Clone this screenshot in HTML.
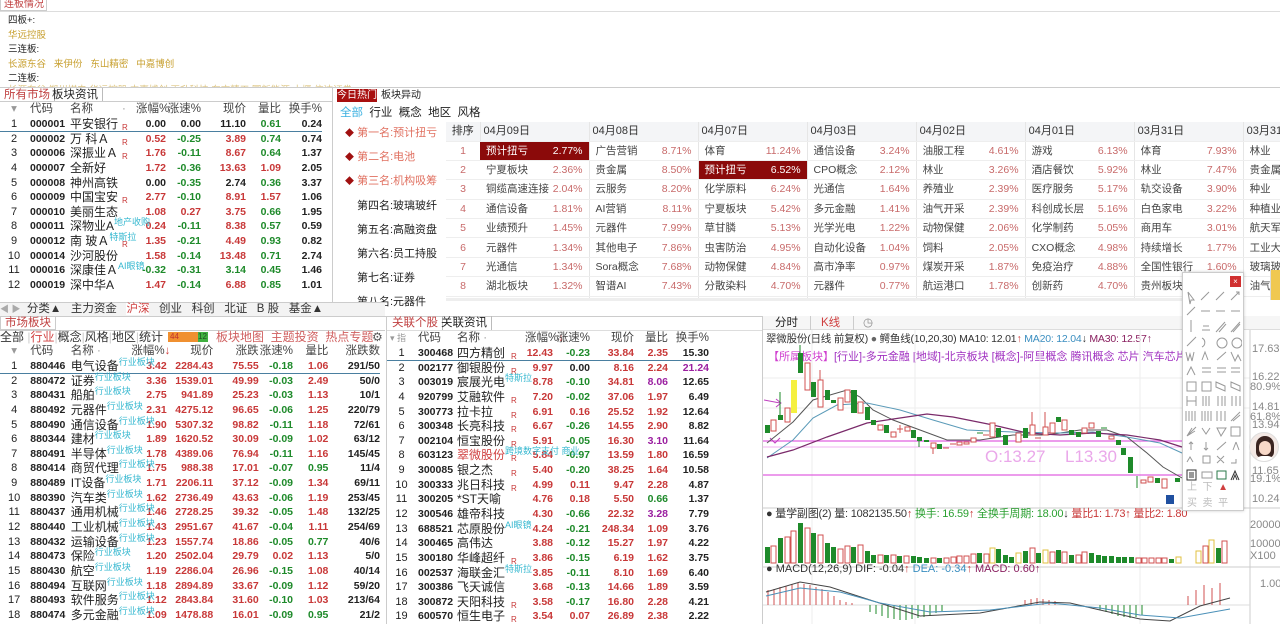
<!DOCTYPE html>
<html><head><meta charset="utf-8">
<style>
*{margin:0;padding:0;box-sizing:border-box}
body{width:1280px;height:624px;overflow:hidden;background:#fff;font-family:"Liberation Sans","Noto Sans CJK SC",sans-serif;font-size:11px;color:#222;position:relative}
.a{position:absolute;white-space:nowrap}
.s{font-size:9.5px}
.gold{color:#c8a030}
table{border-collapse:collapse;table-layout:fixed;position:absolute}
td{height:14.65px;line-height:14px;padding:0;white-space:nowrap;overflow:visible;font-size:11px;vertical-align:middle}
td span{line-height:1}
td.n{text-align:right;font-weight:bold;font-family:"Liberation Sans",sans-serif;font-size:10.5px}
td.c{text-align:center}
td.code{font-weight:bold;font-size:10.5px;padding-left:2px}
td.nm{font-size:12px}
.r{color:#c83838}.g{color:#1e8a2a}.p{color:#9b1fa0}.k{color:#222}
.R{color:#c83838;font-size:8px;position:relative;top:3px}
.tag{color:#36b8d0;font-size:9px;position:relative;top:-5px}
tr.hd td{color:#444;font-size:11.5px}
.tab{position:absolute;height:14px;line-height:14px;font-size:11.5px;padding:0 4px;border-right:1px solid #bbb}
.hot td{height:19.4px;line-height:18px;font-size:10.5px;border-bottom:1px solid #eee;color:#444}
.hot td.pc{color:#c86a6a;text-align:right;padding-right:6px;border-right:1px solid #e6e6e6}
.hot td.nmh{padding-left:6px}
.hot td.hl{background:#8b0a0a;color:#fff}
.hot tr.h td{background:#f4f5f7;color:#333;font-size:11px;height:19px}
</style></head><body>

<div class="a" style="left:0;top:0;width:47px;height:11px;border:1px solid #ccc;border-top:none;color:#c04040;font-size:10px;line-height:9px;padding-left:3px">连板情况</div>
<div class="a" style="left:0;top:11px;width:1280px;border-top:1px solid #ddd"></div>
<div class="a s" style="left:8px;top:12px">四板+:</div>
<div class="a s gold" style="left:8px;top:27px">华远控股</div>
<div class="a s" style="left:8px;top:41px">三连板:</div>
<div class="a s gold" style="left:8px;top:56px">长源东谷&nbsp;&nbsp; 来伊份&nbsp;&nbsp; 东山精密&nbsp;&nbsp; 中嘉博创</div>
<div class="a s" style="left:8px;top:70px">二连板:</div>
<div class="a s gold" style="left:8px;top:82px;height:5px;overflow:hidden;opacity:.6">长源东谷 郑州煤电 华远控股 中嘉博创 再升科技 东方精工 国新能源 十堰 信达证券</div>

<div class="a" style="left:0;top:87px;width:1280px;border-top:1px solid #ccc"></div>
<div class="tab" style="left:0;top:88px;color:#c04040">所有市场</div>
<div class="tab" style="left:48px;top:88px">板块资讯</div>
<div class="a" style="left:0;top:101px;width:332px;border-top:1px solid #ccc"></div>

<table style="left:0;top:102px;width:322px">
<col style="width:28px"><col style="width:42px"><col style="width:52px"><col style="width:14px"><col style="width:30px"><col style="width:35px"><col style="width:45px"><col style="width:35px"><col style="width:41px">
<tr class="hd"><td class="c" style="color:#999">▾</td><td style="padding-left:2px">代码</td><td>名称</td><td style="color:#999">·</td><td style="text-align:right">涨幅%</td><td style="text-align:right">涨速%</td><td style="text-align:right">现价</td><td style="text-align:right">量比</td><td style="text-align:right">换手%</td></tr>
<tr style="border-bottom:1px solid #4a7fa0"><td class="c">1</td><td class="code">000001</td><td class="nm">平安银行</td><td><span class="R">R</span></td><td class="n k">0.00</td><td class="n k">0.00</td><td class="n k">11.10</td><td class="n g">0.61</td><td class="n k">0.24</td></tr>
<tr><td class="c">2</td><td class="code">000002</td><td class="nm">万 科Ａ</td><td><span class="R">R</span></td><td class="n r">0.52</td><td class="n g">-0.25</td><td class="n r">3.89</td><td class="n g">0.74</td><td class="n k">0.74</td></tr>
<tr><td class="c">3</td><td class="code">000006</td><td class="nm">深振业Ａ</td><td><span class="R">R</span></td><td class="n r">1.76</td><td class="n g">-0.11</td><td class="n r">8.67</td><td class="n g">0.64</td><td class="n k">1.37</td></tr>
<tr><td class="c">4</td><td class="code">000007</td><td class="nm">全新好</td><td></td><td class="n r">1.72</td><td class="n g">-0.36</td><td class="n r">13.63</td><td class="n r">1.09</td><td class="n k">2.05</td></tr>
<tr><td class="c">5</td><td class="code">000008</td><td class="nm">神州高铁</td><td></td><td class="n k">0.00</td><td class="n g">-0.35</td><td class="n k">2.74</td><td class="n g">0.36</td><td class="n k">3.37</td></tr>
<tr><td class="c">6</td><td class="code">000009</td><td class="nm">中国宝安</td><td><span class="R">R</span></td><td class="n r">2.77</td><td class="n g">-0.10</td><td class="n r">8.91</td><td class="n r">1.57</td><td class="n k">1.06</td></tr>
<tr><td class="c">7</td><td class="code">000010</td><td class="nm">美丽生态</td><td></td><td class="n r">1.08</td><td class="n r">0.27</td><td class="n r">3.75</td><td class="n g">0.66</td><td class="n k">1.95</td></tr>
<tr><td class="c">8</td><td class="code">000011</td><td class="nm">深物业A<span class="tag">地产收购</span></td><td></td><td class="n r">0.24</td><td class="n g">-0.11</td><td class="n r">8.38</td><td class="n g">0.57</td><td class="n k">0.59</td></tr>
<tr><td class="c">9</td><td class="code">000012</td><td class="nm">南 玻Ａ<span class="tag">特斯拉</span></td><td><span class="R">R</span></td><td class="n r">1.35</td><td class="n g">-0.21</td><td class="n r">4.49</td><td class="n g">0.93</td><td class="n k">0.82</td></tr>
<tr><td class="c">10</td><td class="code">000014</td><td class="nm">沙河股份</td><td></td><td class="n r">1.58</td><td class="n g">-0.14</td><td class="n r">13.48</td><td class="n g">0.71</td><td class="n k">2.74</td></tr>
<tr><td class="c">11</td><td class="code">000016</td><td class="nm">深康佳Ａ<span class="tag">AI眼镜</span></td><td></td><td class="n g">-0.32</td><td class="n g">-0.31</td><td class="n g">3.14</td><td class="n g">0.45</td><td class="n k">1.46</td></tr>
<tr><td class="c">12</td><td class="code">000019</td><td class="nm">深中华A</td><td></td><td class="n r">1.47</td><td class="n g">-0.14</td><td class="n r">6.88</td><td class="n g">0.85</td><td class="n k">1.01</td></tr>
</table>
<div class="a" style="left:332px;top:88px;height:214px;border-left:1px solid #ccc"></div>

<div class="a" style="left:337px;top:89px;width:40px;height:13px;background:#a80f0f;color:#fff;font-size:10px;line-height:13px;text-align:center">今日热门</div>
<div class="a" style="left:381px;top:89px;font-size:10px;line-height:13px">板块异动</div>
<div class="a" style="left:340px;top:104px;font-size:11.5px"><span style="color:#3ab0e0">全部</span>&nbsp; 行业&nbsp; 概念&nbsp; 地区&nbsp; 风格</div>
<div class="a" style="left:345px;top:121px;font-size:11px;line-height:24.2px;color:#222">
<div><span style="color:#a01010;font-size:9px">◆</span> <span style="color:#e07060">第一名:预计扭亏</span></div>
<div><span style="color:#a01010;font-size:9px">◆</span> <span style="color:#e07060">第二名:电池</span></div>
<div><span style="color:#a01010;font-size:9px">◆</span> <span style="color:#e07060">第三名:机构吸筹</span></div>
<div style="padding-left:12px">第四名:玻璃玻纤</div>
<div style="padding-left:12px">第五名:高融资盘</div>
<div style="padding-left:12px">第六名:员工持股</div>
<div style="padding-left:12px">第七名:证券</div>
<div style="padding-left:12px">第八名:元器件</div>
</div>
<div class="a" style="left:446px;top:122px;width:834px;height:178px;overflow:hidden">
<table class="hot" style="left:0;top:0;width:906px">
<col style="width:34px"><col style="width:64px"><col style="width:45px"><col style="width:64px"><col style="width:45px"><col style="width:64px"><col style="width:45px"><col style="width:64px"><col style="width:45px"><col style="width:64px"><col style="width:45px"><col style="width:64px"><col style="width:45px"><col style="width:64px"><col style="width:45px"><col style="width:64px"><col style="width:45px">
<tr class="h"><td class="c" style="border-right:1px solid #e6e6e6">排序</td><td colspan="2" style="padding-left:3px;border-right:1px solid #e6e6e6">04月09日</td><td colspan="2" style="padding-left:3px;border-right:1px solid #e6e6e6">04月08日</td><td colspan="2" style="padding-left:3px;border-right:1px solid #e6e6e6">04月07日</td><td colspan="2" style="padding-left:3px;border-right:1px solid #e6e6e6">04月03日</td><td colspan="2" style="padding-left:3px;border-right:1px solid #e6e6e6">04月02日</td><td colspan="2" style="padding-left:3px;border-right:1px solid #e6e6e6">04月01日</td><td colspan="2" style="padding-left:3px;border-right:1px solid #e6e6e6">03月31日</td><td colspan="2" style="padding-left:3px">03月31日</td></tr>
<tr><td class="c" style="color:#c86a6a">1</td><td class="nmh hl">预计扭亏</td><td class="pc hl" style="color:#fff">2.77%</td><td class="nmh">广告营销</td><td class="pc">8.71%</td><td class="nmh">体育</td><td class="pc">11.24%</td><td class="nmh">通信设备</td><td class="pc">3.24%</td><td class="nmh">油服工程</td><td class="pc">4.61%</td><td class="nmh">游戏</td><td class="pc">6.13%</td><td class="nmh">体育</td><td class="pc">7.93%</td><td class="nmh">林业</td><td class="pc">6.1%</td></tr>
<tr><td class="c" style="color:#c86a6a">2</td><td class="nmh">宁夏板块</td><td class="pc">2.36%</td><td class="nmh">贵金属</td><td class="pc">8.50%</td><td class="nmh hl">预计扭亏</td><td class="pc hl" style="color:#fff">6.52%</td><td class="nmh">CPO概念</td><td class="pc">2.12%</td><td class="nmh">林业</td><td class="pc">3.26%</td><td class="nmh">酒店餐饮</td><td class="pc">5.92%</td><td class="nmh">林业</td><td class="pc">7.47%</td><td class="nmh">贵金属</td><td class="pc">5.1%</td></tr>
<tr><td class="c" style="color:#c86a6a">3</td><td class="nmh">铜缆高速连接</td><td class="pc">2.04%</td><td class="nmh">云服务</td><td class="pc">8.20%</td><td class="nmh">化学原料</td><td class="pc">6.24%</td><td class="nmh">光通信</td><td class="pc">1.64%</td><td class="nmh">养殖业</td><td class="pc">2.39%</td><td class="nmh">医疗服务</td><td class="pc">5.17%</td><td class="nmh">轨交设备</td><td class="pc">3.90%</td><td class="nmh">种业</td><td class="pc">4.1%</td></tr>
<tr><td class="c" style="color:#c86a6a">4</td><td class="nmh">通信设备</td><td class="pc">1.81%</td><td class="nmh">AI营销</td><td class="pc">8.11%</td><td class="nmh">宁夏板块</td><td class="pc">5.42%</td><td class="nmh">多元金融</td><td class="pc">1.41%</td><td class="nmh">油气开采</td><td class="pc">2.39%</td><td class="nmh">科创成长层</td><td class="pc">5.16%</td><td class="nmh">白色家电</td><td class="pc">3.22%</td><td class="nmh">种植业</td><td class="pc">3.1%</td></tr>
<tr><td class="c" style="color:#c86a6a">5</td><td class="nmh">业绩预升</td><td class="pc">1.45%</td><td class="nmh">元器件</td><td class="pc">7.99%</td><td class="nmh">草甘膦</td><td class="pc">5.13%</td><td class="nmh">光学光电</td><td class="pc">1.22%</td><td class="nmh">动物保健</td><td class="pc">2.06%</td><td class="nmh">化学制药</td><td class="pc">5.05%</td><td class="nmh">商用车</td><td class="pc">3.01%</td><td class="nmh">航天军工</td><td class="pc">2.9%</td></tr>
<tr><td class="c" style="color:#c86a6a">6</td><td class="nmh">元器件</td><td class="pc">1.34%</td><td class="nmh">其他电子</td><td class="pc">7.86%</td><td class="nmh">虫害防治</td><td class="pc">4.95%</td><td class="nmh">自动化设备</td><td class="pc">1.04%</td><td class="nmh">饲料</td><td class="pc">2.05%</td><td class="nmh">CXO概念</td><td class="pc">4.98%</td><td class="nmh">持续增长</td><td class="pc">1.77%</td><td class="nmh">工业大麻</td><td class="pc">2.1%</td></tr>
<tr><td class="c" style="color:#c86a6a">7</td><td class="nmh">光通信</td><td class="pc">1.34%</td><td class="nmh">Sora概念</td><td class="pc">7.68%</td><td class="nmh">动物保健</td><td class="pc">4.84%</td><td class="nmh">高市净率</td><td class="pc">0.97%</td><td class="nmh">煤炭开采</td><td class="pc">1.87%</td><td class="nmh">免疫治疗</td><td class="pc">4.88%</td><td class="nmh">全国性银行</td><td class="pc">1.60%</td><td class="nmh">玻璃玻纤</td><td class="pc">1.9%</td></tr>
<tr><td class="c" style="color:#c86a6a">8</td><td class="nmh">湖北板块</td><td class="pc">1.32%</td><td class="nmh">智谱AI</td><td class="pc">7.43%</td><td class="nmh">分散染料</td><td class="pc">4.70%</td><td class="nmh">元器件</td><td class="pc">0.77%</td><td class="nmh">航运港口</td><td class="pc">1.78%</td><td class="nmh">创新药</td><td class="pc">4.70%</td><td class="nmh">贵州板块</td><td class="pc">1.44%</td><td class="nmh">油气开采</td><td class="pc">1.8%</td></tr>
<tr><td class="c" style="color:#c86a6a">9</td><td class="nmh">苹果概念</td><td class="pc">1.13%</td><td class="nmh">其他发电设备</td><td class="pc">7.35%</td><td class="nmh">农药兽药</td><td class="pc">4.33%</td><td class="nmh">光学</td><td class="pc">0.66%</td><td class="nmh">医药商业</td><td class="pc">1.53%</td><td class="nmh">生物制品</td><td class="pc">4.63%</td><td class="nmh">汽车零部</td><td class="pc">1.3%</td><td class="nmh">综合</td><td class="pc">1.7%</td></tr>
</table></div>
<div class="a" style="left:446px;top:298px;width:760px;height:3px;background:#eee"></div>

<div class="a" style="left:0;top:302px;width:385px;height:14px;background:#f3f3f3;border-top:1px solid #ccc;font-size:11.5px;line-height:13px;color:#333">
<span style="color:#aaa;font-size:9px">◀ ▶</span>&nbsp; 分类▲&nbsp;&nbsp; 主力资金&nbsp;&nbsp; <span style="color:#d04040;background:#fff">沪深</span>&nbsp;&nbsp; 创业&nbsp;&nbsp; 科创&nbsp;&nbsp; 北证&nbsp;&nbsp; B 股&nbsp;&nbsp; 基金▲</div>
<div class="a" style="left:0;top:316px;width:1280px;border-top:1px solid #ccc"></div>

<div class="tab" style="left:0;top:316px;color:#c04040;border:1px solid #ccc;border-top:none">市场板块</div>
<div class="a" style="left:0;top:330px;width:385px;border-top:1px solid #ccc"></div>
<div class="a" style="left:0;top:330px;font-size:12px;line-height:14px;color:#333">全部 <span style="color:#ccc">|</span><span style="color:#d04040">行业</span><span style="color:#ccc">|</span>概念<span style="color:#ccc">|</span>风格<span style="color:#ccc">|</span>地区<span style="color:#ccc">|</span>统计</div>
<div class="a" style="left:168px;top:332px;width:40px;height:10px;background:#f09030;font-size:8px;line-height:10px;color:#c03030;padding-left:2px">44<span style="position:absolute;right:0;width:10px;height:10px;background:#40b040;color:#205020">12</span></div>
<div class="a" style="left:216px;top:330px;font-size:12px;line-height:14px;color:#d06060">板块地图&nbsp; 主题投资&nbsp; 热点专题</div>
<div class="a" style="left:372px;top:330px;font-size:12px;color:#555">⚙</div>
<table style="left:0;top:344px;width:380px">
<col style="width:28px"><col style="width:42px"><col style="width:60px"><col style="width:35px"><col style="width:46px"><col style="width:45px"><col style="width:34px"><col style="width:35px"><col style="width:51px">
<tr class="hd"><td class="c" style="color:#999">▾</td><td style="padding-left:2px">代码</td><td>名称 <span style="color:#999">·</span></td><td style="text-align:right">涨幅%<span style="color:#d04040">↓</span></td><td style="text-align:right">现价</td><td style="text-align:right">涨跌</td><td style="text-align:right">涨速%</td><td style="text-align:right">量比</td><td style="text-align:right">涨跌数</td></tr>
<tr style="border-bottom:1px solid #4a7fa0"><td class="c">1</td><td class="code">880446</td><td class="nm">电气设备<span class="tag">行业板块</span></td><td class="n r">3.42</td><td class="n r">2284.43</td><td class="n r">75.55</td><td class="n g">-0.18</td><td class="n r">1.06</td><td class="n k">291/50</td></tr>
<tr><td class="c">2</td><td class="code">880472</td><td class="nm">证券<span class="tag">行业板块</span></td><td class="n r">3.36</td><td class="n r">1539.01</td><td class="n r">49.99</td><td class="n g">-0.03</td><td class="n r">2.49</td><td class="n k">50/0</td></tr>
<tr><td class="c">3</td><td class="code">880431</td><td class="nm">船舶<span class="tag">行业板块</span></td><td class="n r">2.75</td><td class="n r">941.89</td><td class="n r">25.23</td><td class="n g">-0.03</td><td class="n r">1.13</td><td class="n k">10/1</td></tr>
<tr><td class="c">4</td><td class="code">880492</td><td class="nm">元器件<span class="tag">行业板块</span></td><td class="n r">2.31</td><td class="n r">4275.12</td><td class="n r">96.65</td><td class="n g">-0.06</td><td class="n r">1.25</td><td class="n k">220/79</td></tr>
<tr><td class="c">5</td><td class="code">880490</td><td class="nm">通信设备<span class="tag">行业板块</span></td><td class="n r">1.90</td><td class="n r">5307.32</td><td class="n r">98.82</td><td class="n g">-0.11</td><td class="n r">1.18</td><td class="n k">72/61</td></tr>
<tr><td class="c">6</td><td class="code">880344</td><td class="nm">建材<span class="tag">行业板块</span></td><td class="n r">1.89</td><td class="n r">1620.52</td><td class="n r">30.09</td><td class="n g">-0.09</td><td class="n r">1.02</td><td class="n k">63/12</td></tr>
<tr><td class="c">7</td><td class="code">880491</td><td class="nm">半导体<span class="tag">行业板块</span></td><td class="n r">1.78</td><td class="n r">4389.06</td><td class="n r">76.94</td><td class="n g">-0.11</td><td class="n r">1.16</td><td class="n k">145/45</td></tr>
<tr><td class="c">8</td><td class="code">880414</td><td class="nm">商贸代理<span class="tag">行业板块</span></td><td class="n r">1.75</td><td class="n r">988.38</td><td class="n r">17.01</td><td class="n g">-0.07</td><td class="n g">0.95</td><td class="n k">11/4</td></tr>
<tr><td class="c">9</td><td class="code">880489</td><td class="nm">IT设备<span class="tag">行业板块</span></td><td class="n r">1.71</td><td class="n r">2206.11</td><td class="n r">37.12</td><td class="n g">-0.09</td><td class="n r">1.34</td><td class="n k">69/11</td></tr>
<tr><td class="c">10</td><td class="code">880390</td><td class="nm">汽车类<span class="tag">行业板块</span></td><td class="n r">1.62</td><td class="n r">2736.49</td><td class="n r">43.63</td><td class="n g">-0.06</td><td class="n r">1.19</td><td class="n k">253/45</td></tr>
<tr><td class="c">11</td><td class="code">880437</td><td class="nm">通用机械<span class="tag">行业板块</span></td><td class="n r">1.46</td><td class="n r">2728.25</td><td class="n r">39.32</td><td class="n g">-0.05</td><td class="n r">1.48</td><td class="n k">132/25</td></tr>
<tr><td class="c">12</td><td class="code">880440</td><td class="nm">工业机械<span class="tag">行业板块</span></td><td class="n r">1.43</td><td class="n r">2951.67</td><td class="n r">41.67</td><td class="n g">-0.04</td><td class="n r">1.11</td><td class="n k">254/69</td></tr>
<tr><td class="c">13</td><td class="code">880432</td><td class="nm">运输设备<span class="tag">行业板块</span></td><td class="n r">1.23</td><td class="n r">1557.74</td><td class="n r">18.86</td><td class="n g">-0.05</td><td class="n g">0.77</td><td class="n k">40/6</td></tr>
<tr><td class="c">14</td><td class="code">880473</td><td class="nm">保险<span class="tag">行业板块</span></td><td class="n r">1.20</td><td class="n r">2502.04</td><td class="n r">29.79</td><td class="n r">0.02</td><td class="n r">1.13</td><td class="n k">5/0</td></tr>
<tr><td class="c">15</td><td class="code">880430</td><td class="nm">航空<span class="tag">行业板块</span></td><td class="n r">1.19</td><td class="n r">2286.04</td><td class="n r">26.96</td><td class="n g">-0.15</td><td class="n r">1.08</td><td class="n k">40/14</td></tr>
<tr><td class="c">16</td><td class="code">880494</td><td class="nm">互联网<span class="tag">行业板块</span></td><td class="n r">1.18</td><td class="n r">2894.89</td><td class="n r">33.67</td><td class="n g">-0.09</td><td class="n r">1.12</td><td class="n k">59/20</td></tr>
<tr><td class="c">17</td><td class="code">880493</td><td class="nm">软件服务<span class="tag">行业板块</span></td><td class="n r">1.12</td><td class="n r">2843.84</td><td class="n r">31.60</td><td class="n g">-0.10</td><td class="n r">1.03</td><td class="n k">213/64</td></tr>
<tr><td class="c">18</td><td class="code">880474</td><td class="nm">多元金融<span class="tag">行业板块</span></td><td class="n r">1.09</td><td class="n r">1478.88</td><td class="n r">16.01</td><td class="n g">-0.09</td><td class="n g">0.95</td><td class="n k">21/2</td></tr>
</table>
<div class="a" style="left:386px;top:316px;height:308px;border-left:1px solid #ccc"></div>

<div class="tab" style="left:388px;top:316px;color:#c04040">关联个股</div>
<div class="tab" style="left:437px;top:316px">关联资讯</div>
<div class="a" style="left:387px;top:330px;width:375px;border-top:1px solid #ddd"></div>
<table style="left:387px;top:331px;width:322px">
<col style="width:29px"><col style="width:41px"><col style="width:54px"><col style="width:14px"><col style="width:28px"><col style="width:37px"><col style="width:44px"><col style="width:34px"><col style="width:41px">
<tr class="hd"><td style="color:#999;padding-left:3px;font-size:9px">▾ 指</td><td style="padding-left:2px">代码</td><td>名称 <span style="color:#999">·</span></td><td></td><td style="text-align:right">涨幅%<span style="color:#d04040">↓</span></td><td style="text-align:right">涨速%</td><td style="text-align:right">现价</td><td style="text-align:right">量比</td><td style="text-align:right">换手%</td></tr>
<tr style="border-bottom:1px solid #4a7fa0"><td class="c">1</td><td class="code">300468</td><td class="nm">四方精创</td><td><span class="R">R</span></td><td class="n r">12.43</td><td class="n g">-0.23</td><td class="n r">33.84</td><td class="n r">2.35</td><td class="n k">15.30</td></tr>
<tr><td class="c">2</td><td class="code">002177</td><td class="nm">御银股份</td><td><span class="R">R</span></td><td class="n r">9.97</td><td class="n k">0.00</td><td class="n r">8.16</td><td class="n r">2.24</td><td class="n p">21.24</td></tr>
<tr><td class="c">3</td><td class="code">003019</td><td class="nm">宸展光电<span class="tag">特斯拉</span></td><td></td><td class="n r">8.78</td><td class="n g">-0.10</td><td class="n r">34.81</td><td class="n p">8.06</td><td class="n k">12.65</td></tr>
<tr><td class="c">4</td><td class="code">920799</td><td class="nm">艾融软件</td><td><span class="R">R</span></td><td class="n r">7.20</td><td class="n g">-0.02</td><td class="n r">37.06</td><td class="n r">1.97</td><td class="n k">6.49</td></tr>
<tr><td class="c">5</td><td class="code">300773</td><td class="nm">拉卡拉</td><td><span class="R">R</span></td><td class="n r">6.91</td><td class="n r">0.16</td><td class="n r">25.52</td><td class="n r">1.92</td><td class="n k">12.64</td></tr>
<tr><td class="c">6</td><td class="code">300348</td><td class="nm">长亮科技</td><td><span class="R">R</span></td><td class="n r">6.67</td><td class="n g">-0.26</td><td class="n r">14.55</td><td class="n r">2.90</td><td class="n k">8.82</td></tr>
<tr><td class="c">7</td><td class="code">002104</td><td class="nm">恒宝股份</td><td><span class="R">R</span></td><td class="n r">5.91</td><td class="n g">-0.05</td><td class="n r">16.30</td><td class="n p">3.10</td><td class="n k">11.64</td></tr>
<tr><td class="c">8</td><td class="code">603123</td><td class="nm" style="color:#d04040">翠微股份<span class="tag">跨境数字支付 商业</span></td><td><span class="R">R</span></td><td class="n r">5.84</td><td class="n g">-0.97</td><td class="n r">13.59</td><td class="n r">1.80</td><td class="n k">16.59</td></tr>
<tr><td class="c">9</td><td class="code">300085</td><td class="nm">银之杰</td><td><span class="R">R</span></td><td class="n r">5.40</td><td class="n g">-0.20</td><td class="n r">38.25</td><td class="n r">1.64</td><td class="n k">10.58</td></tr>
<tr><td class="c">10</td><td class="code">300333</td><td class="nm">兆日科技</td><td><span class="R">R</span></td><td class="n r">4.99</td><td class="n r">0.11</td><td class="n r">9.47</td><td class="n r">2.28</td><td class="n k">4.87</td></tr>
<tr><td class="c">11</td><td class="code">300205</td><td class="nm">*ST天喻</td><td></td><td class="n r">4.76</td><td class="n r">0.18</td><td class="n r">5.50</td><td class="n g">0.66</td><td class="n k">1.37</td></tr>
<tr><td class="c">12</td><td class="code">300546</td><td class="nm">雄帝科技</td><td></td><td class="n r">4.30</td><td class="n g">-0.66</td><td class="n r">22.32</td><td class="n p">3.28</td><td class="n k">7.79</td></tr>
<tr><td class="c">13</td><td class="code">688521</td><td class="nm">芯原股份<span class="tag">AI眼镜</span></td><td></td><td class="n r">4.24</td><td class="n g">-0.21</td><td class="n r">248.34</td><td class="n r">1.09</td><td class="n k">3.76</td></tr>
<tr><td class="c">14</td><td class="code">300465</td><td class="nm">高伟达</td><td></td><td class="n r">3.88</td><td class="n g">-0.12</td><td class="n r">15.27</td><td class="n r">1.97</td><td class="n k">4.22</td></tr>
<tr><td class="c">15</td><td class="code">300180</td><td class="nm">华峰超纤</td><td><span class="R">R</span></td><td class="n r">3.86</td><td class="n g">-0.15</td><td class="n r">6.19</td><td class="n r">1.62</td><td class="n k">3.75</td></tr>
<tr><td class="c">16</td><td class="code">002537</td><td class="nm">海联金汇<span class="tag">特斯拉</span></td><td></td><td class="n r">3.85</td><td class="n g">-0.11</td><td class="n r">8.10</td><td class="n r">1.69</td><td class="n k">6.40</td></tr>
<tr><td class="c">17</td><td class="code">300386</td><td class="nm">飞天诚信</td><td></td><td class="n r">3.68</td><td class="n g">-0.13</td><td class="n r">14.66</td><td class="n r">1.89</td><td class="n k">3.59</td></tr>
<tr><td class="c">18</td><td class="code">300872</td><td class="nm">天阳科技</td><td><span class="R">R</span></td><td class="n r">3.58</td><td class="n g">-0.17</td><td class="n r">16.80</td><td class="n r">2.28</td><td class="n k">4.21</td></tr>
<tr><td class="c">19</td><td class="code">600570</td><td class="nm">恒生电子</td><td><span class="R">R</span></td><td class="n r">3.54</td><td class="n r">0.07</td><td class="n r">26.89</td><td class="n r">2.38</td><td class="n k">2.22</td></tr>
</table>
<div class="a" style="left:762px;top:316px;height:308px;border-left:1px solid #ccc"></div>

<div class="a" style="left:763px;top:316px;width:517px;height:14px;background:#f6f6f6;border-bottom:1px solid #ddd;font-size:11.5px;line-height:14px">
<span style="position:absolute;left:12px">分时</span><span style="position:absolute;left:58px;color:#d04040">K线</span><span style="position:absolute;left:100px;color:#888">◷</span>
<span style="position:absolute;left:47px;top:0;height:14px;border-left:1px solid #ccc"></span><span style="position:absolute;left:90px;top:0;height:14px;border-left:1px solid #ccc"></span></div>
<div class="a" style="left:766px;top:331px;font-size:10.5px;letter-spacing:-0.2px;color:#333">翠微股份(日线 前复权) <span style="color:#666">●</span> 鳄鱼线(10,20,30) MA10: 12.01<span style="color:#d04040">↑</span> <span style="color:#3a8ec0">MA20: 12.04</span>↓ <span style="color:#8a2060">MA30: 12.57↑</span></div>
<div class="a" style="left:768px;top:348px;font-size:11px;color:#a030c0"><span style="color:#d040d0">【所属板块】</span>[行业]-多元金融 [地域]-北京板块 [概念]-阿里概念 腾讯概念 芯片 汽车芯片 软</div>
<svg class="a" style="left:762px;top:316px" width="518" height="308" viewBox="762 316 518 308">
<g stroke="#eee" stroke-width="1">
<line x1="812" y1="330" x2="812" y2="624"/><line x1="915" y1="330" x2="915" y2="624"/><line x1="1040" y1="330" x2="1040" y2="624"/><line x1="1140" y1="330" x2="1140" y2="624"/>
<line x1="763" y1="378" x2="1250" y2="378"/><line x1="763" y1="408" x2="1250" y2="408"/><line x1="763" y1="508" x2="1250" y2="508"/>
</g>
<line x1="1250" y1="330" x2="1250" y2="624" stroke="#ccc"/>
<line x1="763" y1="567" x2="1280" y2="567" stroke="#ccc"/>
<line x1="763" y1="508" x2="1280" y2="508" stroke="#ccc"/>
<g stroke="#e060e0" stroke-width="1.2"><line x1="763" y1="441" x2="1182" y2="441"/><line x1="763" y1="475" x2="1182" y2="475"/></g>
<line x1="763" y1="447" x2="1182" y2="447" stroke="#f0b0f0" stroke-width="1"/>
<text x="985" y="462" font-size="17" fill="#eaa8ea" font-family="Liberation Sans">O:13.27</text>
<text x="1065" y="462" font-size="17" fill="#eaa8ea" font-family="Liberation Sans">L13.30</text>
<path d="M764 400 L780 403 M776 399 L781 403 L776 407" stroke="#c040c0" fill="none"/>
<path d="M770 438 L775 443 L780 438" stroke="#c040c0" fill="none"/>
<polyline fill="none" stroke="#555" stroke-width="1" points="767,443 793,422 813,400 847,390 860,397 873,410 893,420 920,430 947,440 980,440 1013,435 1047,435 1080,430 1107,430 1127,437 1147,453 1163,467 1182,478"/>
<polyline fill="none" stroke="#5a9ab8" stroke-width="1" points="767,458 793,440 813,418 837,405 867,403 900,410 933,420 967,430 1013,432 1060,433 1093,432 1127,437 1160,443 1182,453"/>
<polyline fill="none" stroke="#7a2a6a" stroke-width="1.2" points="767,457 793,450 827,437 867,423 900,418 927,414 953,417 993,425 1027,433 1060,435 1093,433 1127,435 1160,440 1182,447"/>
<g stroke-width="1">
<rect x="765" y="425" width="5" height="8" fill="#1e8a2a"/>
<rect x="771" y="420" width="5" height="11" fill="#fff" stroke="#d05050"/>
<rect x="778" y="415" width="5" height="5" fill="#1e8a2a"/><line x1="780" y1="392" x2="780" y2="415" stroke="#1e8a2a"/>
<rect x="785" y="408" width="5" height="14" fill="#fff" stroke="#d05050"/>
<rect x="791" y="380" width="6" height="33" fill="#f5f040"/>
<rect x="798" y="353" width="5" height="20" fill="#1e8a2a"/><line x1="800" y1="345" x2="800" y2="353" stroke="#1e8a2a"/>
<rect x="805" y="363" width="5" height="27" fill="#fff" stroke="#d05050"/>
<rect x="811" y="382" width="5" height="15" fill="#1e8a2a"/>
<rect x="818" y="380" width="5" height="27" fill="#fff" stroke="#d05050"/><line x1="820" y1="370" x2="820" y2="380" stroke="#d05050"/>
<rect x="825" y="390" width="5" height="10" fill="#1e8a2a"/>
<rect x="831" y="400" width="5" height="3" fill="#1e8a2a"/>
<rect x="838" y="398" width="5" height="12" fill="#fff" stroke="#d05050"/>
<rect x="845" y="390" width="5" height="12" fill="#fff" stroke="#d05050"/>
<rect x="851" y="390" width="6" height="23" fill="#1e8a2a"/>
<rect x="858" y="402" width="5" height="11" fill="#fff" stroke="#d05050"/>
<rect x="865" y="407" width="5" height="13" fill="#1e8a2a"/>
<rect x="871" y="420" width="5" height="5" fill="#1e8a2a"/>
<rect x="878" y="425" width="5" height="5" fill="#fff" stroke="#d05050"/>
<rect x="884" y="425" width="5" height="8" fill="#1e8a2a"/>
<rect x="891" y="432" width="5" height="5" fill="#fff" stroke="#d05050"/>
<line x1="897" y1="429" x2="903" y2="429" stroke="#d05050"/><line x1="900" y1="425" x2="900" y2="433" stroke="#d05050"/>
<rect x="905" y="427" width="5" height="4" fill="#fff" stroke="#d05050"/>
<rect x="911" y="430" width="5" height="8" fill="#1e8a2a"/>
<rect x="917" y="437" width="5" height="4" fill="#1e8a2a"/><line x1="919" y1="437" x2="919" y2="447" stroke="#1e8a2a"/>
<rect x="924" y="440" width="5" height="2" fill="#1e8a2a"/>
<rect x="931" y="443" width="5" height="5" fill="#fff" stroke="#d05050"/><line x1="933" y1="448" x2="933" y2="454" stroke="#d05050"/>
<rect x="937" y="444" width="5" height="5" fill="#1e8a2a"/>
<line x1="943" y1="448" x2="949" y2="448" stroke="#d05050"/>
<line x1="950" y1="444" x2="956" y2="444" stroke="#d05050"/>
<rect x="957" y="442" width="5" height="3" fill="#fff" stroke="#d05050"/>
<rect x="964" y="442" width="5" height="2" fill="#fff" stroke="#d05050"/>
<rect x="971" y="438" width="5" height="4" fill="#fff" stroke="#d05050"/>
<line x1="977" y1="433" x2="983" y2="433" stroke="#1e8a2a"/>
<line x1="983" y1="435" x2="989" y2="435" stroke="#d05050"/>
<rect x="990" y="423" width="5" height="14" fill="#fff" stroke="#d05050"/>
<rect x="996" y="428" width="5" height="9" fill="#1e8a2a"/>
<rect x="1003" y="435" width="5" height="10" fill="#1e8a2a"/>
<rect x="1016" y="433" width="5" height="9" fill="#fff" stroke="#d05050"/>
<rect x="1023" y="428" width="5" height="10" fill="#1e8a2a"/>
<rect x="1030" y="425" width="5" height="10" fill="#fff" stroke="#d05050"/><line x1="1032" y1="412" x2="1032" y2="425" stroke="#d05050"/>
<line x1="1035" y1="438" x2="1041" y2="438" stroke="#d05050"/>
<rect x="1043" y="427" width="5" height="8" fill="#fff" stroke="#d05050"/><line x1="1045" y1="412" x2="1045" y2="427" stroke="#d05050"/>
<rect x="1050" y="423" width="5" height="10" fill="#fff" stroke="#d05050"/>
<rect x="1056" y="417" width="5" height="5" fill="#1e8a2a"/>
<rect x="1062" y="420" width="5" height="10" fill="#fff" stroke="#d05050"/>
<rect x="1069" y="430" width="5" height="5" fill="#1e8a2a"/>
<rect x="1076" y="432" width="5" height="5" fill="#1e8a2a"/>
<rect x="1082" y="428" width="5" height="5" fill="#fff" stroke="#d05050"/>
<rect x="1089" y="423" width="5" height="5" fill="#fff" stroke="#d05050"/>
<rect x="1096" y="431" width="5" height="6" fill="#1e8a2a"/>
<line x1="1101" y1="428" x2="1107" y2="428" stroke="#1e8a2a"/>
<rect x="1109" y="436" width="5" height="3" fill="#fff" stroke="#d05050"/>
<rect x="1116" y="440" width="5" height="5" fill="#1e8a2a"/>
<rect x="1121" y="448" width="5" height="7" fill="#1e8a2a"/>
<rect x="1128" y="457" width="5" height="16" fill="#1e8a2a"/>
<line x1="1137" y1="476" x2="1137" y2="488" stroke="#1e8a2a"/>
<rect x="1141" y="480" width="5" height="3" fill="#fff" stroke="#d05050"/>
<rect x="1148" y="477" width="5" height="5" fill="#fff" stroke="#d05050"/>
<rect x="1155" y="478" width="5" height="5" fill="#1e8a2a"/>
<rect x="1162" y="479" width="5" height="9" fill="#fff" stroke="#d05050"/>
<rect x="1175" y="478" width="5" height="4" fill="#1e8a2a"/>
</g>
<rect x="1166" y="495" width="8" height="9" fill="#2050a0"/>
<g font-size="11" fill="#888" font-family="Liberation Sans">
<text x="1252" y="352">17.63</text><text x="1252" y="380">16.22</text><text x="1250" y="390">80.9%</text>
<text x="1252" y="410">14.81</text><text x="1250" y="420">61.8%</text><text x="1252" y="428">13.94</text>
<text x="1252" y="474">11.65</text><text x="1250" y="482">19.1%</text><text x="1252" y="502">10.24</text>
<text x="1250" y="528">20000</text><text x="1250" y="547">10000</text><text x="1250" y="559">X100</text><text x="1260" y="587">1.00</text>
</g>
<g>
<rect x="765" y="547" width="5" height="16" fill="#1e8a2a"/><rect x="771" y="546" width="5" height="17" fill="#fff" stroke="#d05050"/>
<rect x="778" y="538" width="5" height="25" fill="#1e8a2a"/><rect x="785" y="537" width="5" height="26" fill="#fff" stroke="#d05050"/>
<rect x="791" y="531" width="5" height="32" fill="#fff" stroke="#d05050"/><rect x="798" y="523" width="5" height="40" fill="#1e8a2a"/>
<rect x="805" y="528" width="5" height="35" fill="#fff" stroke="#d05050"/><rect x="811" y="533" width="5" height="30" fill="#1e8a2a"/>
<rect x="818" y="535" width="5" height="28" fill="#fff" stroke="#d05050"/><rect x="825" y="543" width="5" height="20" fill="#1e8a2a"/>
<rect x="831" y="547" width="5" height="16" fill="#1e8a2a"/><rect x="838" y="549" width="5" height="14" fill="#fff" stroke="#d05050"/>
<rect x="845" y="546" width="5" height="17" fill="#fff" stroke="#d05050"/><rect x="851" y="547" width="5" height="16" fill="#1e8a2a"/>
<rect x="858" y="545" width="5" height="18" fill="#fff" stroke="#d05050"/><rect x="865" y="551" width="5" height="12" fill="#1e8a2a"/>
<rect x="871" y="555" width="5" height="8" fill="#1e8a2a"/><rect x="878" y="555" width="5" height="8" fill="#fff" stroke="#d05050"/>
<rect x="884" y="555" width="5" height="8" fill="#1e8a2a"/><rect x="891" y="555" width="5" height="8" fill="#fff" stroke="#d05050"/>
<rect x="897" y="556" width="5" height="7" fill="#1e8a2a"/><rect x="904" y="556" width="5" height="7" fill="#fff" stroke="#d05050"/>
<rect x="911" y="556" width="5" height="7" fill="#1e8a2a"/><rect x="917" y="557" width="5" height="6" fill="#1e8a2a"/>
<rect x="924" y="558" width="5" height="5" fill="#1e8a2a"/><rect x="931" y="558" width="5" height="5" fill="#fff" stroke="#d05050"/>
<rect x="937" y="558" width="5" height="5" fill="#1e8a2a"/><rect x="944" y="558" width="5" height="5" fill="#fff" stroke="#d05050"/>
<rect x="951" y="557" width="5" height="6" fill="#fff" stroke="#d05050"/><rect x="957" y="556" width="5" height="7" fill="#fff" stroke="#d05050"/>
<rect x="964" y="556" width="5" height="7" fill="#fff" stroke="#d05050"/><rect x="971" y="554" width="5" height="9" fill="#fff" stroke="#d05050"/>
<rect x="977" y="553" width="5" height="10" fill="#1e8a2a"/><rect x="984" y="554" width="5" height="9" fill="#fff" stroke="#d05050"/>
<rect x="990" y="548" width="5" height="15" fill="#fff" stroke="#e0c040"/><rect x="996" y="549" width="5" height="14" fill="#1e8a2a"/>
<rect x="1003" y="555" width="5" height="8" fill="#1e8a2a"/><rect x="1009" y="557" width="5" height="6" fill="#1e8a2a"/>
<rect x="1016" y="553" width="5" height="10" fill="#fff" stroke="#e0c040"/><rect x="1023" y="551" width="5" height="12" fill="#1e8a2a"/>
<rect x="1030" y="548" width="5" height="15" fill="#fff" stroke="#d05050"/><rect x="1036" y="553" width="5" height="10" fill="#1e8a2a"/>
<rect x="1043" y="550" width="5" height="13" fill="#fff" stroke="#e0c040"/><rect x="1050" y="552" width="5" height="11" fill="#fff" stroke="#d05050"/>
<rect x="1056" y="550" width="5" height="13" fill="#1e8a2a"/><rect x="1062" y="552" width="5" height="11" fill="#fff" stroke="#d05050"/>
<rect x="1069" y="555" width="5" height="8" fill="#1e8a2a"/><rect x="1076" y="555" width="5" height="8" fill="#fff" stroke="#d05050"/>
<rect x="1082" y="552" width="5" height="11" fill="#fff" stroke="#d05050"/><rect x="1089" y="553" width="5" height="10" fill="#1e8a2a"/>
<rect x="1096" y="555" width="5" height="8" fill="#1e8a2a"/><rect x="1102" y="556" width="5" height="7" fill="#1e8a2a"/>
<rect x="1109" y="556" width="5" height="7" fill="#1e8a2a"/><rect x="1116" y="557" width="5" height="6" fill="#1e8a2a"/>
<rect x="1122" y="557" width="5" height="6" fill="#1e8a2a"/><rect x="1129" y="557" width="5" height="6" fill="#1e8a2a"/>
<rect x="1136" y="558" width="5" height="5" fill="#fff" stroke="#d05050"/><rect x="1142" y="558" width="5" height="5" fill="#fff" stroke="#d05050"/>
<rect x="1149" y="558" width="5" height="5" fill="#fff" stroke="#d05050"/><rect x="1156" y="558" width="5" height="5" fill="#fff" stroke="#d05050"/>
<rect x="1162" y="558" width="5" height="5" fill="#fff" stroke="#d05050"/><rect x="1169" y="559" width="5" height="4" fill="#1e8a2a"/>
<rect x="1176" y="557" width="5" height="6" fill="#fff" stroke="#e0c040"/><rect x="1196" y="551" width="5" height="12" fill="#fff" stroke="#e0c040"/>
<rect x="1203" y="546" width="5" height="17" fill="#fff" stroke="#d05050"/><rect x="1209" y="540" width="5" height="23" fill="#fff" stroke="#e0c040"/>
<rect x="1216" y="548" width="5" height="15" fill="#1e8a2a"/><rect x="1222" y="541" width="5" height="22" fill="#fff" stroke="#d05050"/>
</g>
<line x1="763" y1="605" x2="1250" y2="605" stroke="#ddd"/>
<g stroke="#d05050" stroke-width="1">
<path d="M768 605V590M774 605V589M780 605V587M786 605V586M792 605V584M798 605V583M804 605V584M810 605V585M816 605V587M822 605V589M828 605V592M834 605V596M840 605V600M846 605V602M852 605V603"/>
<path d="M1188 605V596M1196 605V590M1204 605V585M1212 605V588M1220 605V583"/>
<path d="M1025 605V600M1031 605V599M1037 605V598M1043 605V599M1049 605V600M1055 605V601"/>
</g>
<g stroke="#1e8a2a" stroke-width="1"><path d="M870 605V612M876 605V614M882 605V616M888 605V618M894 605V619M900 605V620M906 605V620M912 605V619M918 605V618M924 605V617M930 605V615M936 605V613M942 605V611M1100 605V610M1106 605V612M1112 605V614M1118 605V616M1124 605V617M1130 605V618M1136 605V617M1142 605V615"/></g>
<polyline fill="none" stroke="#444" points="766,592 800,582 830,587 870,600 920,616 980,613 1040,602 1070,603 1100,610 1140,619 1170,621 1200,606 1230,598"/>
<polyline fill="none" stroke="#4a90b8" points="766,596 800,588 840,592 880,603 930,612 990,610 1050,603 1100,608 1140,615 1180,618 1230,609"/>
</svg>
<div class="a" style="left:766px;top:505px;font-size:11px;letter-spacing:-0.2px;color:#333">● 量学副图(2) 量: 1082135.50<span class="r">↑</span> <span style="color:#2aa030">换手: 16.59</span><span class="r">↑</span> <span style="color:#2aa030">全换手周期: 18.00</span>↓ <span class="r">量比1: 1.73↑ 量比2: 1.80</span></div>
<div class="a" style="left:766px;top:563px;font-size:11px;color:#333">● MACD(12,26,9) DIF: -0.04<span class="r">↑</span> <span style="color:#3a8ec0">DEA: -0.34</span><span class="r">↑</span> <span style="color:#8a2060">MACD: 0.60↑</span></div>

<div class="a" style="left:1182px;top:272px;width:62px;height:239px;background:#fff;border:1px solid #ccc;box-shadow:0 0 3px rgba(0,0,0,.2)"></div>
<div class="a" style="left:1230px;top:276px;width:11px;height:11px;background:#d03030;color:#fff;font-size:8px;line-height:11px;text-align:center">×</div>
<svg class="a" style="left:1184px;top:290px" width="58" height="220" viewBox="0 0 58 220" stroke="#999" fill="none" stroke-width="1">
<path d="M4 2l6 8-3 0-1 4z M17 10l8-8 M32 10l8-8 M47 10l8-8M52 2h3v3"/>
<path d="M3 25l8-8 M17 21h9 M32 21h9 M47 21h9"/>
<path d="M7 30v12 M18 40h8M19 36h6M32 42l9-10M35 42l7-8M47 42l9-10M49 42l7-8"/>
<path d="M3 56l9-9 M18 48a5 5 0 0 1 0 9 M38 53m-5 0a5 5 0 1 0 10 0a5 5 0 1 0-10 0 M53 53m-5 0a5 5 0 1 0 10 0a5 5 0 1 0-10 0"/>
<path d="M2 62l2 9 2-7 2 7 2-9 M18 70l3-8 3 8M33 70l9-8 M47 62l4 9 3-6 3 6"/>
<path d="M3 85l4-8 4 8 M18 78h9M18 82h9M33 78h9M33 82h9M47 78h9M47 82h9"/>
<path d="M3 92h9v9h-9z M18 92h9v9h-9z M32 92l9 4v5l-9-4z M47 92l9 4v5l-9-4z"/>
<path d="M3 106v10M3 111h9M12 106v10 M19 106v10M22 106v10M25 106v10 M34 106v10M38 106v10M41 106v10 M48 106v10M52 106v10M56 106v10"/>
<path d="M2 121v10M5 121v10M8 121v10M11 121v10 M18 121v10M21 121v10M24 121v10M27 121v10 M33 121v10M37 121v10M41 121v10 M47 131l9-9M49 131l7-6"/>
<path d="M3 146l9-9M3 146l8-5M3 146l5-8 M18 138l4 6 4-6 M33 138h9l-5 8z M47 137h9v9h-9z"/>
<path d="M7 160v-8M5 154l2-2 2 2 M22 152v8M20 158l2 2 2-2 M33 160l9-8 M52 152l-3 8M52 152l3 8"/>
<path d="M3 172l3-5 3 5 M19 166h7v7h-7z M33 166l7 7M40 166l-7 7 M47 173h5v-4"/>
<path stroke="#333" d="M3 180h9v10h-9zM5 183h5M5 185h5M5 187h5"/><path d="M18 182h10v6h-10z"/><path stroke="#2a7a4a" d="M33 181h9v8h-9z"/><path stroke="#333" d="M47 190l4-9 4 9M49 190l2-5 2 5"/>
</svg>
<div class="a" style="left:1187px;top:480px;font-size:10px;color:#bbb;line-height:16px">上&nbsp; 下&nbsp; <span style="color:#d04040">▲</span><br>买&nbsp; 卖&nbsp; 平</div>
<div class="a" style="left:1249px;top:432px;width:30px;height:30px;border-radius:50%;background:#f3e8e4;border:1px solid #ddd;overflow:hidden">
<div style="position:absolute;left:6px;top:3px;width:18px;height:22px;border-radius:9px 9px 6px 6px;background:#3a2420"></div>
<div style="position:absolute;left:9px;top:8px;width:12px;height:14px;border-radius:6px;background:#f7d8c8"></div>
<div style="position:absolute;left:6px;top:23px;width:18px;height:10px;border-radius:6px 6px 0 0;background:#fff"></div>
</div>
<div class="a" style="left:1270px;top:270px;width:10px;height:30px;background:#f0c850;border-left:1px solid #ddd"></div>
</body></html>
